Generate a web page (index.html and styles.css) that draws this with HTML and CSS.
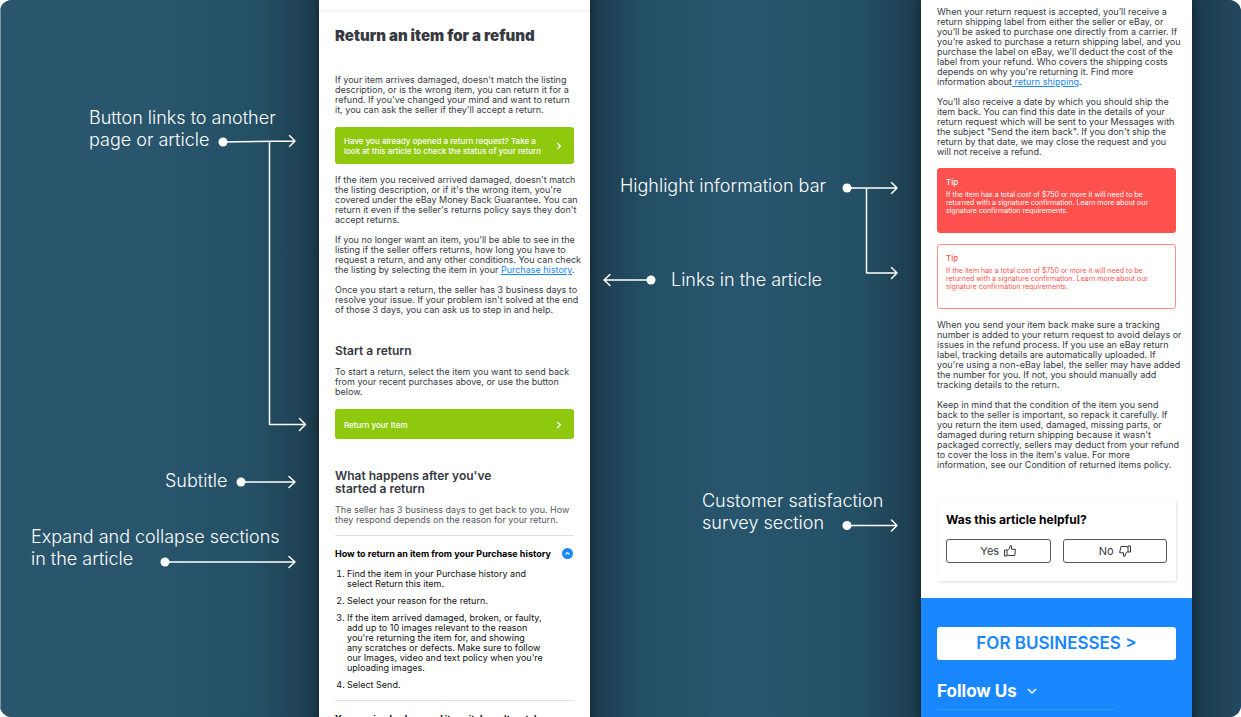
FILE: index.html
```html
<!DOCTYPE html>
<html lang="en">
<head>
<meta charset="utf-8">
<meta name="viewport" content="width=device-width, initial-scale=1">
<title>Return an item for a refund</title>
<link rel="stylesheet" href="styles.css">
</head>
<body>
<main class="board">
  <section class="notes notes-left">
    <p class="note note-buttons">Button links to another<br>page or article</p>
    <p class="note note-subtitle">Subtitle</p>
    <p class="note note-expand">Expand and collapse sections<br>in the article</p>
    <svg class="wires" viewBox="0 0 319 717" aria-hidden="true">
      <circle cx="223" cy="142" r="4.5"/>
      <path d="M223 142 295 141M289.500 135.500 295 141 289.500 146.500M269.500 142V424.500H305M299.500 418.500 305.500 424.500 299.500 430.500"/>
      <circle cx="241" cy="482" r="4.500"/>
      <path d="M241 482H295M289 476.500 295 482 289 487.500"/>
      <circle cx="165" cy="562" r="4.500"/>
      <path d="M165 562H295M289 556.500 295 562 289 567.500"/>
    </svg>
  </section>

  <article class="phone">
    <div class="topbar"></div>
    <div class="content">
      <h1>Return an item for a refund</h1>
      <p>If your item arrives damaged, doesn't match the listing<br>description, or is the wrong item, you can return it for a<br>refund. If you've changed your mind and want to return<br>it, you can ask the seller if they'll accept a return.</p>
      <a class="cta" href="#status"><span>Have you already opened a return request? Take a<br>look at this article to check the status of your return</span>
        <svg viewBox="0 0 6 8" width="6" height="8" aria-hidden="true"><path d="M1 1 4.500 4 1 7"/></svg></a>
      <p>If the item you received arrived damaged, doesn't match<br>the listing description, or if it's the wrong item, you're<br>covered under the eBay Money Back Guarantee. You can<br>return it even if the seller's returns policy says they don't<br>accept returns.</p>
      <p>If you no longer want an item, you'll be able to see in the<br>listing if the seller offers returns, how long you have to<br>request a return, and any other conditions. You can check<br>the listing by selecting the item in your <a href="#history">Purchase history</a>.</p>
      <p>Once you start a return, the seller has 3 business days to<br>resolve your issue. If your problem isn't solved at the end<br>of those 3 days, you can ask us to step in and help.</p>
      <h2>Start a return</h2>
      <p>To start a return, select the item you want to send back<br>from your recent purchases above, or use the button<br>below.</p>
      <a class="cta" href="#return"><span>Return your Item</span>
        <svg viewBox="0 0 6 8" width="6" height="8" aria-hidden="true"><path d="M1 1 4.500 4 1 7"/></svg></a>
      <h2>What happens after you've<br>started a return</h2>
      <p class="soft">The seller has 3 business days to get back to you. How<br>they respond depends on the reason for your return.</p>
      <details class="fold" open>
        <summary>How to return an item from your Purchase history
          <svg viewBox="0 0 11 11" width="11" height="11" aria-hidden="true"><circle cx="5.500" cy="5.500" r="5.500"/><path d="M3.500 6.500 5.500 4.500 7.500 6.500"/></svg></summary>
        <ol>
          <li>Find the item in your Purchase history and<br>select Return this item.</li>
          <li>Select your reason for the return.</li>
          <li>If the item arrived damaged, broken, or faulty,<br>add up to 10 images relevant to the reason<br>you're returning the item for, and showing<br>any scratches or defects. Make sure to follow<br>our Images, video and text policy when you're<br>uploading images.</li>
          <li>Select Send.</li>
        </ol>
      </details>
      <details class="fold">
        <summary>You received a damaged item, it doesn't match</summary>
      </details>
    </div>
  </article>

  <section class="notes notes-middle">
    <p class="note note-highlight">Highlight information bar</p>
    <p class="note note-links">Links in the article</p>
    <p class="note note-survey">Customer satisfaction<br>survey section</p>
    <svg class="wires" viewBox="0 0 331 717" aria-hidden="true">
      <circle cx="257" cy="188" r="4.500"/>
      <path d="M257 188H307M301.500 182.500 307 188 301.500 193.500M276.500 188V273H307M301.500 267.500 307 273 301.500 278.500"/>
      <circle cx="61" cy="280" r="4.500"/>
      <path d="M61 280H14M20 274.500 14 280 20 285.500"/>
      <circle cx="257" cy="525.500" r="4.500"/>
      <path d="M257 525.500H307M301.500 520 307 525.500 301.500 531"/>
    </svg>
  </section>

  <article class="phone">
    <div class="content content-continued">
      <p>When your return request is accepted, you’ll receive a<br>return shipping label from either the seller or eBay, or<br>you’ll be asked to purchase one directly from a carrier. If<br>you’re asked to purchase a return shipping label, and you<br>purchase the label on eBay, we'll deduct the cost of the<br>label from your refund. Who covers the shipping costs<br>depends on why you're returning it. Find more<br>information about<a href="#shipping"> return shipping</a>.</p>
      <p>You’ll also receive a date by which you should ship the<br>item back. You can find this date in the details of your<br>return request which will be sent to your Messages with<br>the subject "Send the item back". If you don't ship the<br>return by that date, we may close the request and you<br>will not receive a refund.</p>
      <aside class="tip tip-filled">
        <h3>Tip</h3>
        <p>If the item has a total cost of $750 or more it will need to be<br>returned with a signature confirmation. Learn more about our<br>signature confirmation requirements.</p>
      </aside>
      <aside class="tip">
        <h3>Tip</h3>
        <p>If the item has a total cost of $750 or more it will need to be<br>returned with a signature confirmation. Learn more about our<br>signature confirmation requirements.</p>
      </aside>
      <p>When you send your item back make sure a tracking<br>number is added to your return request to avoid delays or<br>issues in the refund process. If you use an eBay return<br>label, tracking details are automatically uploaded. If<br>you're using a non-eBay label, the seller may have added<br>the number for you. If not, you should manually add<br>tracking details to the return.</p>
      <p>Keep in mind that the condition of the item you send<br>back to the seller is important, so repack it carefully. If<br>you return the item used, damaged, missing parts, or<br>damaged during return shipping because it wasn't<br>packaged correctly, sellers may deduct from your refund<br>to cover the loss in the item's value. For more<br>information, see our Condition of returned items policy.</p>
      <section class="survey">
        <h3>Was this article helpful?</h3>
        <div class="votes">
          <button type="button">Yes
            <svg viewBox="0 0 12 12" width="12" height="12" aria-hidden="true"><path d="M.5 5H3V11H.500ZM3 5.500 5.500 3.500 6 .700H7.300L7.700 4.300H11.400L10.800 10.500H5L3 9.800"/></svg></button>
          <button type="button">No
            <svg viewBox="0 0 12 12" width="12" height="12" aria-hidden="true"><path d="M11.500 7H9V1H11.500ZM9 6.500 6.500 8.500 6 11.300H4.700L4.300 7.700H.600L2 1.500H7L9 2"/></svg></button>
        </div>
      </section>
    </div>
    <footer class="footer">
      <a class="business" href="#business">FOR BUSINESSES &gt;</a>
      <button class="follow" type="button">Follow Us
        <svg viewBox="0 0 10 6" width="10" height="6" aria-hidden="true"><path d="M1 1 5 5 9 1"/></svg></button>
      <hr>
    </footer>
  </article>
  <div class="edge"></div>
</main>
</body>
</html>
```
FILE: styles.css
```css
* { box-sizing: border-box; }

body {
  margin: 0;
  background: #fff;
  font-family: Inter, sans-serif;
  font-size: 9px;
  line-height: 10px;
  color: #36393f;
}

h1, h2, h3, p, ol { margin: 0; }

a { color: #1987ff; }

button { font-family: inherit; cursor: pointer; }

.board {
  display: grid;
  grid-template-columns: minmax(0, 319fr) minmax(0, 271fr) minmax(0, 331fr) minmax(0, 271fr) minmax(0, 49fr);
  height: 100vh;
  overflow: hidden;
  border-radius: 12px;
  background: #28556c;
}

/* Annotations */
.notes {
  position: relative;
  color: #fff;
  font-size: 18px;
  font-weight: 300;
  line-height: 22px;
  white-space: nowrap;
}

.notes-left {
  padding-top: 107px;
  background: linear-gradient(90deg, #29566d 45%, #245066 80%, #1c3b4d);
  box-shadow: inset 1px 0 #7e9aa7;
}

.notes-middle {
  padding-top: 175px;
  background: linear-gradient(90deg, #1c3b4d, #245066 18%, #28566e 45%, #245066 80%, #1c3b4d);
}

.edge { background: linear-gradient(90deg, #1b3a4b, #23495e); }

.note-buttons { margin-left: 89px; }
.note-subtitle { margin: 319px 0 0 165px; }
.note-expand { margin: 34px 0 0 31px; }
.note-highlight { margin-left: 30px; }
.note-links { margin: 72px 0 0 81px; }
.note-survey { margin: 199px 0 0 112px; }

.wires {
  position: absolute;
  top: 0;
  left: 0;
  width: 100%;
  fill: #fff;
  z-index: 2;
}

.wires path {
  fill: none;
  stroke: #fff;
  stroke-width: 1.5;
  stroke-linecap: round;
  stroke-linejoin: round;
}

/* Phone screens */
.phone {
  position: relative;
  z-index: 1;
  background: #fff;
  box-shadow: 0 0 10px rgba(0, 0, 0, .45);
  white-space: nowrap;
}

.topbar {
  height: 12px;
  border-bottom: 2px solid #f4f4f4;
}

.content {
  display: flex;
  flex-direction: column;
  gap: 10px;
  padding: 14px 16px 0;
}

.content-continued { padding-top: 7px; }

h1 {
  margin-bottom: 19px;
  font-size: 15px;
  font-weight: 900;
  line-height: 20px;
}

h2 {
  margin-top: 19px;
  font-size: 12px;
  font-weight: 600;
  line-height: 13px;
}

.soft { color: #54575c; }

.cta {
  display: flex;
  align-items: center;
  justify-content: space-between;
  min-height: 30px;
  margin: 2px 0 1px;
  padding: 9px 12px 8px 9px;
  border-radius: 3px;
  background: #8fc90e;
  color: #fff;
  font-size: 8px;
  font-weight: 500;
  text-decoration: none;
}

svg { flex: none; }

.cta path,
.follow path,
summary path {
  fill: none;
  stroke: #fff;
  stroke-width: 1.2;
}

.fold {
  border-top: 1px solid #e2e2e2;
  color: #111;
}

summary {
  display: flex;
  align-items: center;
  justify-content: space-between;
  min-height: 33px;
  padding: 2px 1px 0 0;
  color: #000;
  font-weight: 700;
  list-style: none;
  cursor: pointer;
}

summary circle { fill: #1987ff; }

ol {
  display: flex;
  flex-direction: column;
  gap: 7px;
  padding: 0 0 0 12px;
}

/* Tips */
.tip {
  min-height: 65px;
  margin-top: 1px;
  padding: 8px;
  border: 1px solid #ff8d8b;
  border-radius: 3px;
  color: #ff514e;
}

.tip + p { margin-top: 1px; }

.tip-filled {
  border-color: #ff514e;
  background: #ff514e;
  color: #fff;
}

.tip h3 {
  margin-bottom: 4px;
  font-size: 8px;
  font-weight: 500;
}

.tip p {
  font-size: 7px;
  line-height: 8px;
}

/* Survey */
.survey {
  margin-top: 19px;
  padding: 14px 9px 18px;
  border-radius: 3px;
  box-shadow: 1px 1px 3px rgba(0, 0, 0, .12);
}

.survey h3 {
  margin-bottom: 12px;
  color: #000;
  font-size: 12px;
  line-height: 14px;
}

.votes {
  display: grid;
  grid-template-columns: 1fr 1fr;
  gap: 12px;
}

.votes button {
  display: flex;
  align-items: center;
  justify-content: center;
  gap: 5px;
  height: 24px;
  padding: 0;
  border: 1px solid #55585c;
  border-radius: 3px;
  background: #fff;
  color: #36393f;
  font-size: 11px;
}

.votes path {
  fill: none;
  stroke: #36393f;
  stroke-linejoin: round;
}

/* Footer */
.footer {
  margin-top: 17px;
  min-height: 119px;
  padding: 29px 16px 0;
  background: #1987ff;
}

.business {
  display: block;
  border-radius: 3px;
  background: #fff;
  font-size: 17px;
  font-weight: 600;
  line-height: 33px;
  text-align: center;
  text-decoration: none;
}

.follow {
  display: flex;
  align-items: center;
  gap: 10px;
  margin-top: 21px;
  padding: 0;
  border: 0;
  background: none;
  color: #fff;
  font-size: 17px;
  font-weight: 700;
  line-height: 20px;
}

.follow path { stroke-width: 1.5; }

.footer hr {
  width: 74%;
  margin: 8px 0 0;
  border: 0;
  border-top: 1px solid #3c99ff;
}
```
